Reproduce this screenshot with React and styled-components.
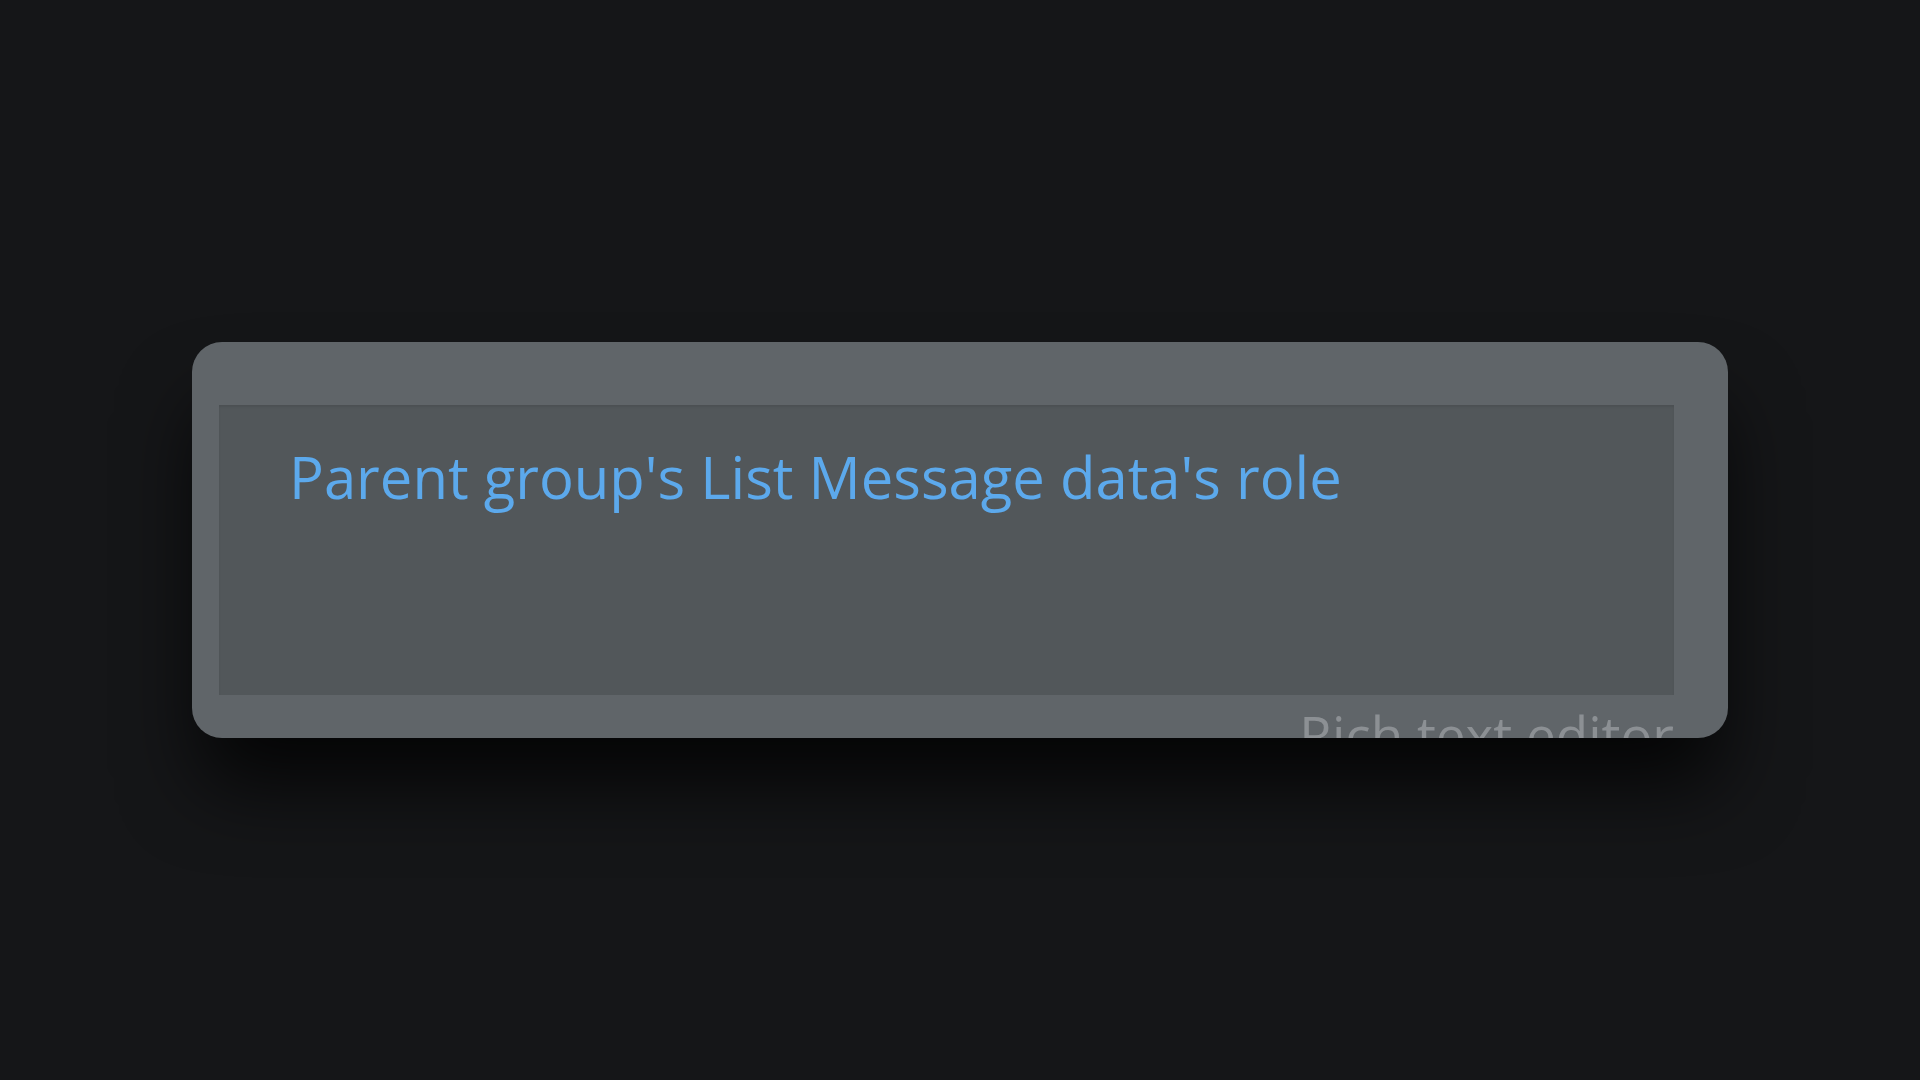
import React from 'react'
import styled, { createGlobalStyle } from 'styled-components'

const GlobalStyle = createGlobalStyle`
  html, body {
    margin: 0;
    padding: 0;
    background: #151618;
    font-family: 'Open Sans', 'Noto Sans', sans-serif;
  }
`

const Page = styled.div`
  width: 100vw;
  height: 100vh;
  display: flex;
  align-items: center;
  justify-content: center;
  background: #151618;
`

const Card = styled.div`
  width: 1536px;
  height: 396px;
  box-sizing: border-box;
  padding: 63px 54px 0 27px;
  background: #606569;
  border-radius: 30px;
  overflow: hidden;
  display: flex;
  flex-direction: column;
  box-shadow: 0 55px 80px -10px rgba(0, 0, 0, 0.8);
`

const Editor = styled.div`
  height: 290px;
  flex-shrink: 0;
  box-sizing: border-box;
  padding: 32px 70px;
  background: #52575a;
  box-shadow: inset 0 2px 2px rgba(0, 0, 0, 0.08);
`

const Expression = styled.span`
  font-size: 58px;
  color: #5ca9ec;
  white-space: nowrap;
`

const Label = styled.div`
  margin-top: 3px;
  align-self: flex-end;
  font-size: 53px;
  line-height: normal;
  color: #8c9094;
  white-space: nowrap;
`

export default function App() {
  return (
    <>
      <GlobalStyle />
      <Page>
        <Card>
          <Editor>
            <Expression>Parent group's List Message data's role</Expression>
          </Editor>
          <Label>Rich text editor</Label>
        </Card>
      </Page>
    </>
  )
}
